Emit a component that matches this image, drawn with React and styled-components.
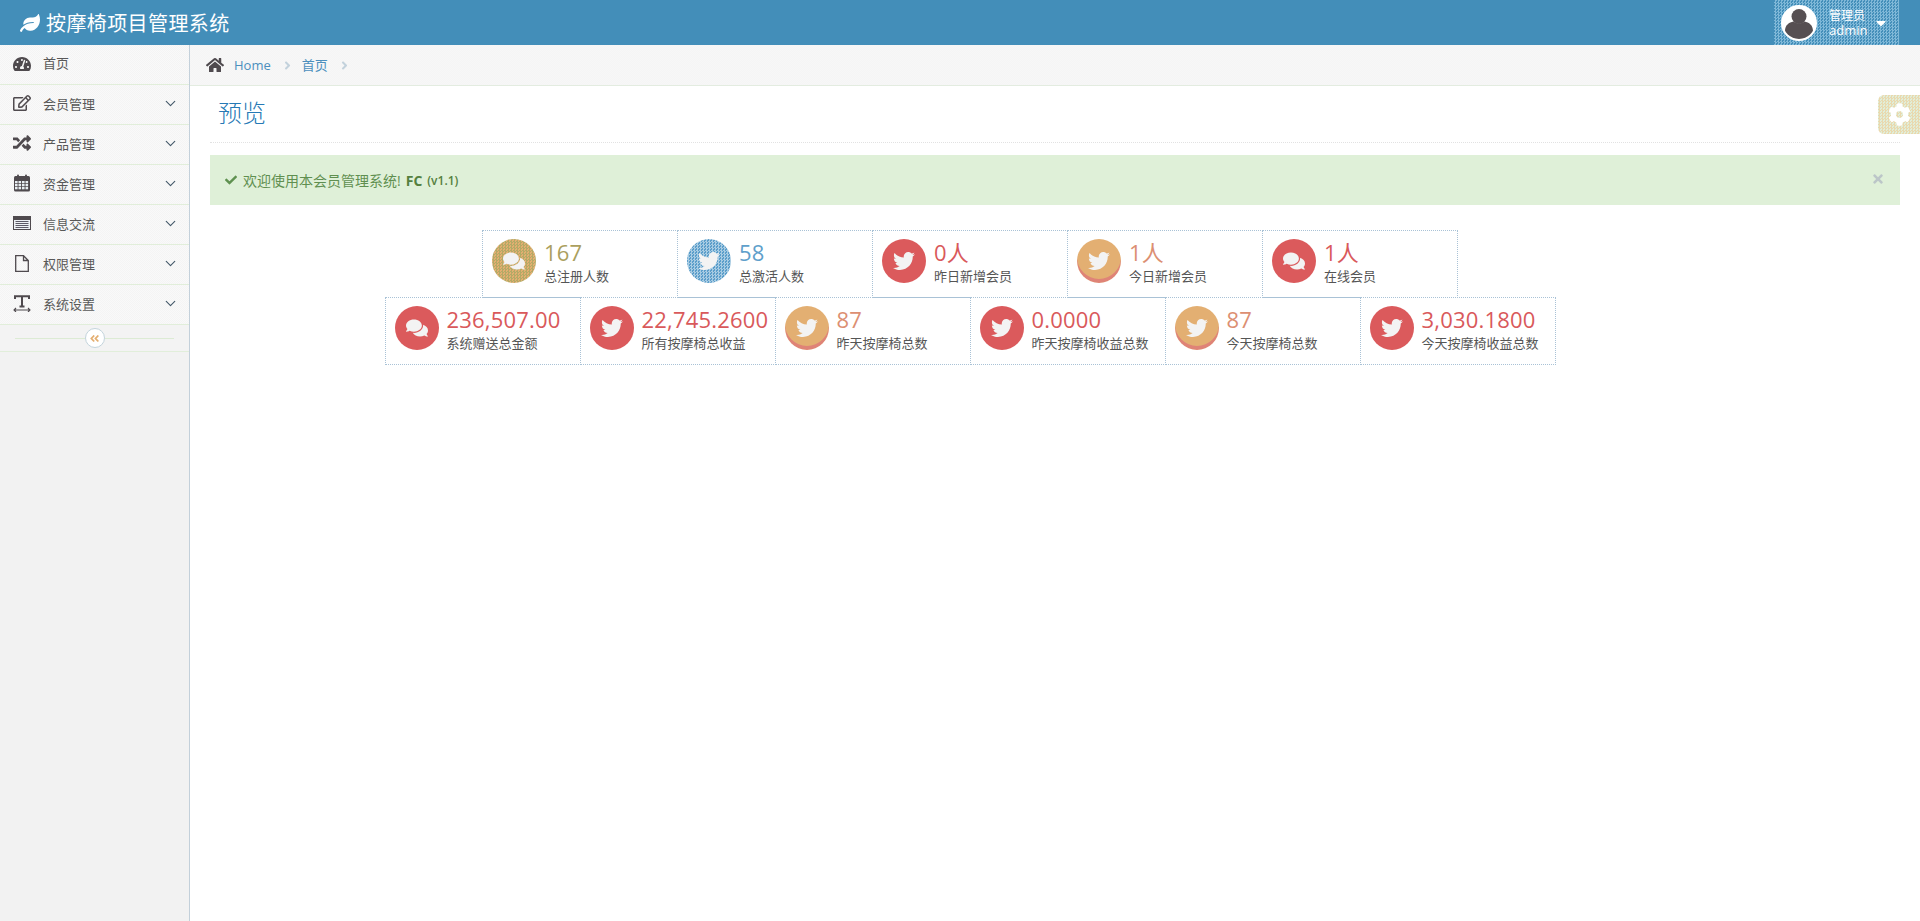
import React from 'react'
import styled, { createGlobalStyle, css } from 'styled-components'
import { ChevronDown } from 'lucide-react'
import {
  FaLeaf, FaTachometerAlt, FaRegEdit, FaRandom,
  FaAngleRight, FaAngleDoubleLeft, FaHome, FaCheck, FaTimes, FaCog, FaCaretDown, FaTwitter, FaComments,
} from 'react-icons/fa'

// the reference is a dithered capture, a 1px checker gets the same grain
const checker = (color, size = 2) => css`
  background-image: conic-gradient(${color} 25%, transparent 0 50%, ${color} 0 75%, transparent 0);
  background-size: ${size}px ${size}px;
`

const GlobalStyle = createGlobalStyle`
  html, body { margin: 0; padding: 0; height: 100%; background: #fff; }
  body {
    font-family: "Open Sans", "Noto Sans CJK SC", sans-serif;
    font-size: 13px;
    color: #393939;
    overflow: hidden;
  }
`

const Page = styled.div`
  height: 100vh;
  display: flex;
  flex-direction: column;
`

const Navbar = styled.header`
  height: 45px;
  flex: none;
  background: #438eb9;
  display: flex;
  align-items: center;
  justify-content: space-between;
  padding: 0 21px 0 20px;
`

const Brand = styled.div`
  display: flex;
  align-items: center;
  gap: 6px;
  color: #fff;
  font-size: 20px;
  letter-spacing: 0.4px;
  svg { font-size: 20px; }
`

const UserPanel = styled.div`
  width: 125px;
  height: 45px;
  box-sizing: border-box;
  background-color: #438eb9;
  ${checker('#7fb8d8', 3)}
  display: flex;
  align-items: center;
  padding-left: 7px;
  color: #fff;
`

const Avatar = styled.div`
  width: 36px;
  height: 36px;
  flex: none;
  border-radius: 50%;
  border: 2px solid #fff;
  box-sizing: border-box;
  background: #fff;
  overflow: hidden;
  margin-right: 12px;
  svg { display: block; width: 100%; height: 100%; }
`

const UserInfo = styled.div`
  display: flex;
  flex-direction: column;
  font-size: 12px;
  line-height: 15px;
  width: 42px;
  span:last-child { font-size: 13px; }
`

const Caret = styled(FaCaretDown)`
  font-size: 16px;
  margin-left: 2px;
`

const Body = styled.div`
  flex: 1;
  display: flex;
  min-height: 0;
`

const Sidebar = styled.aside`
  width: 190px;
  flex: none;
  box-sizing: border-box;
  background: #f2f2f2;
  border-right: 1px solid #c3d0da;
`

const NavItem = styled.div`
  height: 40px;
  box-sizing: border-box;
  display: flex;
  align-items: center;
  padding: 0 10px 3px 13px;
  background-color: #f9f9f9;
  ${checker('#f4f4f4')}
  border-bottom: 1px solid #e1eeda;
  color: #585858;
  font-size: 13px;
`

const NavIcon = styled.span`
  width: 18px;
  height: 18px;
  margin-right: 12px;
  margin-top: ${p => p.$home ? 2 : 0}px;
  display: flex;
  align-items: center;
  justify-content: center;
  font-size: 18px;
  color: #4f4a4e;
`

const NavLabel = styled.span`
  flex: 1;
  margin-top: ${p => p.$home ? -1 : 0}px;
`

const Chevron = styled(ChevronDown)`
  width: 17px;
  height: 17px;
  stroke-width: 1.6;
  color: #44596a;
`

const Collapse = styled.div`
  height: 27px;
  box-sizing: border-box;
  display: flex;
  align-items: center;
  padding: 0 15px;
  background: #f3f3f3;
  border-bottom: 1px solid #e1eeda;
`

const CollapseLine = styled.div`
  flex: 1;
  height: 1px;
  background: #dcebd4;
`

const CollapseButton = styled.div`
  width: 20px;
  height: 20px;
  box-sizing: border-box;
  flex: none;
  border-radius: 50%;
  border: 1px solid #c3d4dc;
  background: #fff;
  color: #e4ae70;
  font-size: 11px;
  display: flex;
  align-items: center;
  justify-content: center;
`

const Main = styled.main`
  flex: 1;
  min-width: 0;
  position: relative;
`

const Breadcrumbs = styled.nav`
  height: 41px;
  box-sizing: border-box;
  background-color: #f5f5f5;
  ${checker('#f7f7f7')}
  border-bottom: 1px solid #e3ece0;
  display: flex;
  align-items: center;
  padding-left: 16px;
  color: #4c8fbd;
  span:nth-of-type(2) { margin: -2px 0 0 -1px; }
`

const HomeIcon = styled(FaHome)`
  font-size: 18px;
  color: #4f4a4e;
  margin-right: 10px;
`

const Separator = styled(FaAngleRight)`
  font-size: 13px;
  color: #c3d2dc;
  margin: 0 9px 0 10px;
`

const Content = styled.div`
  padding: 0 20px;
`

const PageHeader = styled.div`
  height: 57px;
  box-sizing: border-box;
  border-bottom: 1px dotted #e2e2e2;
  padding: 9px 0 0 8px;
  h1 {
    margin: 0;
    font-size: 24px;
    line-height: 36px;
    font-weight: 300;
    color: #2679b5;
  }
`

const SettingsButton = styled.div`
  position: absolute;
  top: 50px;
  right: 0;
  width: 42px;
  height: 39px;
  border-radius: 6px 0 0 6px;
  background-color: #e1eed9;
  ${checker('#e9d9ae', 3)}
  display: flex;
  align-items: center;
  justify-content: center;
  color: #fff;
  font-size: 23px;
`

const Alert = styled.div`
  margin-top: 12px;
  height: 50px;
  box-sizing: border-box;
  background: #dff0d8;
  color: #5f8f50;
  display: flex;
  align-items: center;
  padding: 0 15px;
  font-size: 14px;
  position: relative;
  b { margin: 0 5px; color: #55803f; }
  small { font-size: 12px; font-weight: 600; color: #55803f; }
`

const AlertCheck = styled(FaCheck)`
  font-size: 12px;
  color: #5f9150;
  margin-right: 6px;
`

const AlertClose = styled(FaTimes)`
  position: absolute;
  right: 15px;
  top: 17px;
  font-size: 14px;
  color: #bcc6c8;
`

const Stats = styled.section`
  margin-top: 25px;
  padding-right: 170px;
`

const StatRow = styled.div`
  display: flex;
  justify-content: center;
  & + & { margin-top: -1px; }
`

const Tile = styled.div`
  width: 196px;
  height: 68px;
  box-sizing: border-box;
  flex: none;
  border: 1px dotted #a9c2d6;
  padding: 8px 0 0 9px;
  display: flex;
  & + & { margin-left: -1px; }
`

const tones = {
  olive: { bg: '#e4ae70', dots: '#b3aa66', text: '#ab9f5e' },
  blue: { bg: '#5a9dca', dots: '#a7cbe2', text: '#5fa0cb' },
  red: { bg: '#db5a5c', dots: '#db5a5c', text: '#d9595b' },
  orange: { bg: '#e3af72', dots: '#e3af72', text: '#dc8f72', edge: '#df8377' },
}

const Badge = styled.div`
  width: 44px;
  height: 44px;
  flex: none;
  border-radius: 50%;
  background-color: ${p => tones[p.$tone].bg};
  ${p => checker(tones[p.$tone].dots, 3)}
  ${p => tones[p.$tone].edge && css`box-shadow: inset 0 -4px 0 ${tones[p.$tone].edge};`}
  display: flex;
  align-items: center;
  justify-content: center;
  color: #f3f3f3;
  font-size: 22px;
`

const StatText = styled.div`
  margin-left: 8px;
  display: flex;
  flex-direction: column;
  white-space: nowrap;
`

const StatValue = styled.div`
  font-size: 22px;
  line-height: 28px;
  letter-spacing: 0.2px;
  margin-top: -1px;
  color: ${p => tones[p.$tone].text};
`

const StatLabel = styled.div`
  font-size: 13px;
  line-height: 18px;
  margin-top: 1px;
  color: #555;
`

const CalendarIcon = () => (
  <svg width="18" height="18" viewBox="0 0 18 18">
    <rect x="1" y="2" width="16" height="15.5" rx="1.5" fill="currentColor" />
    <rect x="4" y="0.5" width="2" height="4" rx="1" fill="currentColor" />
    <rect x="12" y="0.500" width="2" height="4" rx="1" fill="currentColor" />
    {[7, 10, 13].map(y => [2, 5.500, 9, 12.500].map(x => (
      <rect key={`${x}-${y}`} x={x} y={y} width="2.600" height="2.300" fill="#e8eef2" />
    )))}
  </svg>
)

const ListIcon = () => (
  <svg width="18" height="14" viewBox="0 0 18 14">
    <rect x="0" y="0" width="18" height="14" fill="currentColor" />
    <rect x="1" y="4" width="16" height="9" fill="#eef1f4" />
    {[5, 7, 9, 11].map(y => <rect key={y} x="2.500" y={y} width="13" height="1" fill="#5d5a66" />)}
  </svg>
)

const FileIcon = () => (
  <svg width="14" height="17" viewBox="0 0 14 17">
    <path d="M.7.7H8.500L13.300 5.500V16.300H.7zM8.500.7V5.500H13.300" fill="none" stroke="currentColor" strokeWidth="1.300" />
  </svg>
)

const TextWidthIcon = () => (
  <svg width="18" height="17" viewBox="0 0 18 17">
    <path d="M2 4V1.200H16V4M9 1.200V11.500M6.500 11.500H11.500" fill="none" stroke="currentColor" strokeWidth="2" />
    <path d="M1 15H17M3 13L1 15L3 17M15 13L17 15L15 17" fill="none" stroke="currentColor" strokeWidth="1.100" />
  </svg>
)

const menu = [
  { label: '首页', Icon: FaTachometerAlt, home: true },
  { label: '会员管理', Icon: FaRegEdit },
  { label: '产品管理', Icon: FaRandom },
  { label: '资金管理', Icon: CalendarIcon },
  { label: '信息交流', Icon: ListIcon },
  { label: '权限管理', Icon: FileIcon },
  { label: '系统设置', Icon: TextWidthIcon },
]

const topRow = [
  { value: '167', label: '总注册人数', tone: 'olive', Icon: FaComments },
  { value: '58', label: '总激活人数', tone: 'blue', Icon: FaTwitter },
  { value: '0人', label: '昨日新增会员', tone: 'red', Icon: FaTwitter },
  { value: '1人', label: '今日新增会员', tone: 'orange', Icon: FaTwitter },
  { value: '1人', label: '在线会员', tone: 'red', Icon: FaComments },
]

const bottomRow = [
  { value: '236,507.00', label: '系统赠送总金额', tone: 'red', Icon: FaComments },
  { value: '22,745.2600', label: '所有按摩椅总收益', tone: 'red', Icon: FaTwitter },
  { value: '87', label: '昨天按摩椅总数', tone: 'orange', Icon: FaTwitter },
  { value: '0.0000', label: '昨天按摩椅收益总数', tone: 'red', Icon: FaTwitter },
  { value: '87', label: '今天按摩椅总数', tone: 'orange', Icon: FaTwitter },
  { value: '3,030.1800', label: '今天按摩椅收益总数', tone: 'red', Icon: FaTwitter },
]

function StatTile({ value, label, tone, Icon }) {
  return (
    <Tile>
      <Badge $tone={tone}><Icon /></Badge>
      <StatText>
        <StatValue $tone={tone}>{value}</StatValue>
        <StatLabel>{label}</StatLabel>
      </StatText>
    </Tile>
  )
}

export default function App() {
  return (
    <Page>
      <GlobalStyle />
      <Navbar>
        <Brand><FaLeaf />按摩椅项目管理系统</Brand>
        <UserPanel>
          <Avatar>
            <svg viewBox="0 0 32 32">
              <circle cx="16" cy="9.500" r="7.500" fill="#564f52" />
              <path d="M2 24c0-6 4-8.500 8.500-9.500 3 2.500 8 2.500 11 0 4.500 1 8.500 3.500 8.500 9.500 0 5-6 8-14 8s-14-3-14-8z" fill="#564f52" />
            </svg>
          </Avatar>
          <UserInfo><span>管理员</span><span>admin</span></UserInfo>
          <Caret />
        </UserPanel>
      </Navbar>
      <Body>
        <Sidebar>
          {menu.map(({ label, Icon, home }) => (
            <NavItem key={label}>
              <NavIcon $home={home}><Icon /></NavIcon>
              <NavLabel $home={home}>{label}</NavLabel>
              {!home && <Chevron />}
            </NavItem>
          ))}
          <Collapse>
            <CollapseLine />
            <CollapseButton><FaAngleDoubleLeft /></CollapseButton>
            <CollapseLine />
          </Collapse>
        </Sidebar>
        <Main>
          <Breadcrumbs>
            <HomeIcon />
            <span>Home</span>
            <Separator />
            <span>首页</span>
            <Separator />
          </Breadcrumbs>
          <SettingsButton><FaCog /></SettingsButton>
          <Content>
            <PageHeader><h1>预览</h1></PageHeader>
            <Alert>
              <AlertCheck />
              欢迎使用本会员管理系统!
              <b>FC</b>
              <small>(v1.1)</small>
              <AlertClose />
            </Alert>
            <Stats>
              <StatRow>{topRow.map(t => <StatTile key={t.label} {...t} />)}</StatRow>
              <StatRow>{bottomRow.map(t => <StatTile key={t.label} {...t} />)}</StatRow>
            </Stats>
          </Content>
        </Main>
      </Body>
    </Page>
  )
}
